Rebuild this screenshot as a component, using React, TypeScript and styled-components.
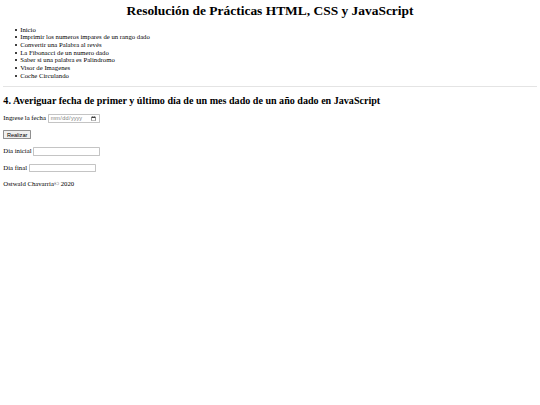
import styled, { createGlobalStyle } from "styled-components";

const GlobalStyle = createGlobalStyle`
  html, body {
    margin: 0;
    padding: 0;
    background: #ffffff;
  }
`;

// the reference is a desktop-sized page shrunk down to 540px
const Page = styled.div`
  zoom: 0.42;
  padding: 8px;
  font-family: "Liberation Serif", "Times New Roman", serif;
  font-size: 16px;
  color: #000000;
`;

const Title = styled.h1`
  margin: 0;
  font-size: 32px;
  line-height: 37px;
  font-weight: bold;
  text-align: center;
`;

const Menu = styled.ul`
  margin: 16px 0;
  padding-left: 40px;
  list-style: none;
`;

const MenuItem = styled.li`
  position: relative;
  line-height: 18.3px;

  &::before {
    content: "";
    position: absolute;
    left: -13px;
    top: 7px;
    width: 5px;
    height: 5px;
    border-radius: 50%;
    background: #000000;
  }
`;

const MenuLink = styled.a`
  color: inherit;
  text-decoration: none;
`;

const Rule = styled.hr`
  margin: 15px 0 8px;
  height: 0;
  border: none;
  border-top: 3px solid #e4e4e4;
`;

const Heading = styled.h2`
  margin: 18px 0 18px;
  font-size: 24px;
  line-height: 28px;
  font-weight: bold;
`;

const Field = styled.p`
  margin: 18px 0;
  line-height: 21px;
`;

const Label = styled.label`
  margin-right: 4px;
`;

const Input = styled.input<{ $w: number }>`
  box-sizing: border-box;
  width: ${({ $w }) => $w}px;
  height: 21px;
  padding: 1px 4px;
  font-family: "Liberation Sans", Arial, sans-serif;
  font-size: 13.33px;
  color: #808080;
  border: 2px solid #c4c4c4;
  border-radius: 2px;
  vertical-align: middle;
`;

const Button = styled.button`
  font-family: "Liberation Sans", Arial, sans-serif;
  font-size: 13.33px;
  padding: 1px 6px;
  background: #efefef;
  border: 2px solid #8f8f8f;
  border-radius: 2px;
  color: #000000;
`;

const Footer = styled.footer`
  margin: 15px 0;
`;

const links = [
  "Inicio",
  "Imprimir los numeros impares de un rango dado",
  "Convertir una Palabra al revés",
  "La Fibonacci de un numero dado",
  "Saber si una palabra es Palindromo",
  "Visor de Imagenes",
  "Coche Circulando",
];

export default function App() {
  return (
    <Page>
      <GlobalStyle />
      <Title>Resolución de Prácticas HTML, CSS y JavaScript</Title>
      <Menu>
        {links.map((l) => (
          <MenuItem key={l}>
            <MenuLink href="#">{l}</MenuLink>
          </MenuItem>
        ))}
      </Menu>
      <Rule />
      <Heading>
        4. Averiguar fecha de primer y último día de un mes dado de un año dado en JavaScript
      </Heading>
      <Field>
        <Label htmlFor="fecha">Ingrese la fecha</Label>
        <Input id="fecha" type="date" $w={126} />
      </Field>
      <Field>
        <Button type="button">Realizar</Button>
      </Field>
      <Field>
        <Label htmlFor="inicial">Dia inicial</Label>
        <Input id="inicial" type="text" $w={160} />
      </Field>
      <Field>
        <Label htmlFor="final">Dia final</Label>
        <Input id="final" type="text" $w={160} />
      </Field>
      <Footer>Ostwald Chavarria© 2020</Footer>
    </Page>
  );
}
